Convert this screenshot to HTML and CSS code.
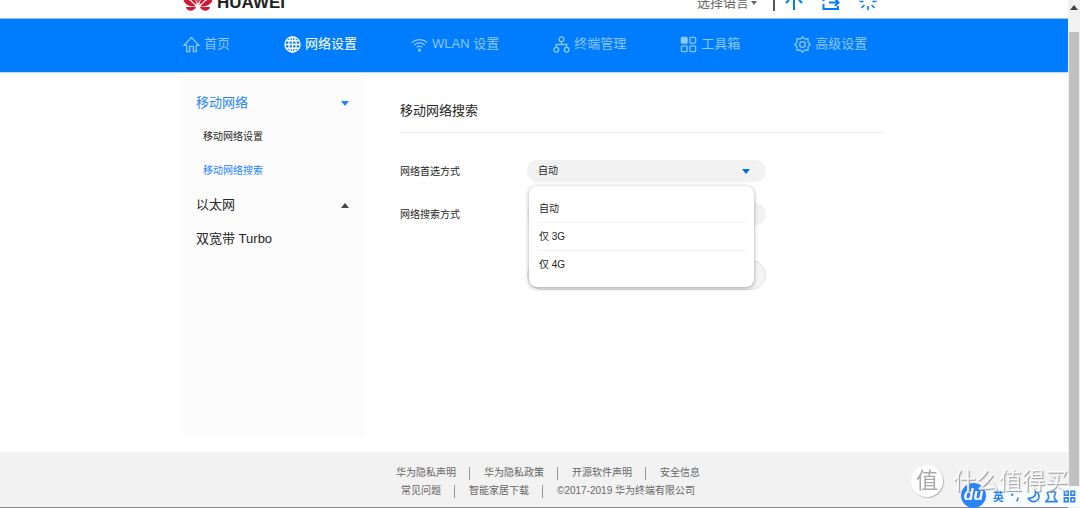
FILE: index.html
```html
<!DOCTYPE html>
<html lang="zh-CN">
<head>
<meta charset="utf-8">
<title>移动网络搜索</title>
<link rel="stylesheet" href="styles.css">
</head>
<body>
<div class="page">
  <header class="header">
    <div class="container header-row">
      <div class="brand">
        <svg class="brand-mark" viewBox="0 0 30 30">
          <path d="M13.800 24C12 17 9 11 6 7c-3 5 0 12 7.800 17zM16.200 24c1.800-7 4.800-13 7.800-17 3 5 0 12-7.800 17zM14.500 23C11 14 10 6 13.500 2c1.800 6 1.800 13 1 21zM15.500 23C19 14 20 6 16.500 2c-1.800 6-1.800 13-1 21z"/>
          <path d="M12.800 25.500C9 21 5 18 .3 16c-.4 6 4.300 10 12.500 9.500zM17.200 25.500c3.800-4.500 7.800-7.500 12.500-9.500.4 6-4.300 10-12.500 9.500z"/>
          <path d="M13.300 26.300C9 26 6 26 2.600 26.300c2.400 4.700 7.500 4.600 10.700 0zM16.700 26.300c4.300-.3 7.300-.3 10.700 0-2.400 4.700-7.500 4.600-10.700 0z"/>
        </svg>
        <span class="brand-name">HUAWEI</span>
      </div>
      <div class="tools">
        <button class="language" type="button">选择语言<span class="caret caret-small"></span></button>
        <span class="tools-line"></span>
        <a class="tool" href="#" aria-label="首页"><svg viewBox="0 0 18 18"><path d="M1 11l3-3M17 11l-3-3M9 8v10"/></svg></a>
        <a class="tool" href="#" aria-label="退出"><svg viewBox="0 0 18 18"><path d="M1.500 12v5H16v-3M1.500 9V1H16v6M7 10.500h9M13 7l3.500 3.500L13 14"/></svg></a>
        <a class="tool" href="#" aria-label="重启"><svg class="spinner" viewBox="0 0 18 18"><path d="M9 0v4M9 14v4M.5 9.500h4M13.500 9.500h4M3 3l3 3M12.500 13l3 3M15 3l-3 3M5.500 13l-3 3"/></svg></a>
      </div>
    </div>
  </header>

  <nav class="nav">
    <div class="container nav-row">
      <a class="nav-item" href="#"><svg viewBox="0 0 18 18"><path d="M1 10 9 1.500 17 10h-3v6.500h-3V11H7v5.500H4V10z"/></svg>首页</a>
      <a class="nav-item active" href="#"><svg viewBox="0 0 18 18"><circle cx="9" cy="9" r="8"/><ellipse cx="9" cy="9" rx="4" ry="8"/><path d="M9 1v16M1 9h16M2.500 5h13M2.500 13h13"/></svg>网络设置</a>
      <a class="nav-item" href="#"><svg viewBox="0 0 18 18"><path d="M1 7a11.500 11.500 0 0 1 16 0M3.500 9.500a8 8 0 0 1 11 0M6 12a4.500 4.500 0 0 1 6 0"/><circle cx="9" cy="15" r="1"/></svg>WLAN 设置</a>
      <a class="nav-item" href="#"><svg viewBox="0 0 18 18"><circle cx="9" cy="3.500" r="2.500"/><circle cx="3.500" cy="14.500" r="2.500"/><circle cx="14.500" cy="14.500" r="2.500"/><path d="M9 6v3M3.500 12V9h11v3"/></svg>终端管理</a>
      <a class="nav-item" href="#"><svg viewBox="0 0 18 18"><rect x="1.500" y="1.500" width="6" height="6" rx="1" fill="currentColor"/><rect x="10.500" y="1.500" width="6" height="6" rx="1"/><rect x="1.500" y="10.500" width="6" height="6" rx="1"/><rect x="10.500" y="10.500" width="6" height="6" rx="1"/></svg>工具箱</a>
      <a class="nav-item" href="#"><svg viewBox="0 0 18 18"><path d="M9 .8 11 3l3.800-.1L15 6.800 17.200 9 15 11.200l-.2 3.900L11 15l-2 2.200L7 15l-3.800.1-.2-3.900L.8 9 3 6.800l.2-3.900L7 3z"/><circle cx="9" cy="9" r="3"/></svg>高级设置</a>
    </div>
  </nav>

  <div class="container body-row">
    <aside class="sidebar">
      <a class="side-item current" href="#">移动网络<span class="caret"></span></a>
      <a class="side-item sub" href="#">移动网络设置</a>
      <a class="side-item sub current" href="#">移动网络搜索</a>
      <a class="side-item" href="#">以太网<span class="caret caret-up"></span></a>
      <a class="side-item" href="#">双宽带 Turbo</a>
    </aside>

    <main class="content">
      <h1 class="title">移动网络搜索</h1>
      <form class="form">
        <label class="label" for="mode">网络首选方式</label>
        <div class="field">
          <select class="select" id="mode"><option>自动</option></select>
          <span class="caret field-caret"></span>
          <ul class="menu" role="listbox">
            <li class="menu-item" role="option">自动</li>
            <li class="menu-item" role="option">仅 3G</li>
            <li class="menu-item" role="option">仅 4G</li>
          </ul>
        </div>
        <label class="label" for="search">网络搜索方式</label>
        <div class="field"><select class="select" id="search"></select></div>
        <button class="submit" type="button"></button>
      </form>
    </main>
  </div>

  <footer class="footer">
    <div class="links"><a href="#">华为隐私声明</a><a href="#">华为隐私政策</a><a href="#">开源软件声明</a><a href="#">安全信息</a></div>
    <div class="links"><a href="#">常见问题</a><a href="#">智能家居下载</a><span>©2017-2019 华为终端有限公司</span></div>
  </footer>
</div>

<div class="scrollbar"><span class="caret caret-up"></span><div class="thumb"></div></div>

<div class="ime">
  <span class="ime-logo">du</span>
  <span class="ime-lang">英</span>
  <svg viewBox="0 0 14 14"><circle cx="3.500" cy="5" r="1.300" fill="currentColor" stroke="none"/><path d="M9.500 8v1.500q0 1.500-1.500 2.500"/></svg>
  <svg viewBox="0 0 14 14"><path d="M9 1.500q1.500 7-7.500 7.500 2 4 6.500 3.500 5-1 5-6Q12.500 3 9 1.500z"/></svg>
  <svg viewBox="0 0 14 14"><path d="M4.500 1.500q2.500 1.500 5 0l2 1.500-1.500 4 .5 2.500L13 12.500H1L3.500 9.500 4 7 2.500 3z"/></svg>
  <svg viewBox="0 0 14 14"><path d="M1.500 1.500h4v4h-4zM8.500 1.500h4v4h-4zM1.500 8.500h4v4h-4zM8.500 8.500h4v4h-4z"/></svg>
</div>
<div class="watermark"><span class="watermark-badge">值</span><span>什么值得买</span></div>
</body>
</html>
```

FILE: styles.css
```css
* { box-sizing: border-box; }

body {
  margin: 0;
  min-height: 100vh;
  display: flex;
  background: #fff;
  color: #262626;
  font-family: "Liberation Sans", "Noto Sans CJK SC", sans-serif;
  font-size: 13px;
  line-height: 20px;
}

a { color: inherit; text-decoration: none; }
button, select { font: inherit; color: inherit; border: 0; padding: 0; background: none; }
svg { fill: none; stroke: currentColor; }

.page { flex: 1; display: flex; flex-direction: column; }
.container { width: 100%; max-width: 702px; margin: 0 auto; }

.caret {
  border: 4px solid transparent;
  border-top: 5px solid currentColor;
  border-bottom: 0;
}
.caret-up { border-top: 0; border-bottom: 5px solid #444; }
.caret-small { border-width: 4px 3px 0; }

.header { height: 18px; overflow: hidden; display: flex; align-items: flex-end; }
.header-row { display: flex; justify-content: space-between; align-items: flex-end; padding-bottom: 7px; }
.brand { display: flex; align-items: flex-end; gap: 4px; }
.brand-mark { width: 30px; height: 30px; stroke: none; fill: #cf1733; }
.brand-name { font-size: 17px; font-weight: bold; line-height: 17px; color: #222; }
.tools { display: flex; align-items: flex-end; padding-right: 8px; color: #007dff; }
.language { display: flex; align-items: center; gap: 2px; color: #666; line-height: 16px; }
.tools-line { width: 2px; height: 18px; background: #555; margin: 0 10px 0 16px; }
.tool { display: flex; padding-bottom: 1px; }
.tool + .tool { margin-left: 19px; }
.tool svg { width: 18px; height: 18px; stroke-width: 2; }
.tool .spinner { stroke-width: 1.6; }

.nav { background: #007dff; border-top: 1px solid #8cc4ff; border-bottom: 1px solid #b8dbff; }
.nav-row { display: flex; gap: 54px; padding: 15px 0 18px; }
.nav-item { display: flex; align-items: center; gap: 4px; color: #8cc6ff; white-space: nowrap; }
.nav-item svg { width: 17px; height: 17px; stroke-width: 1.4; }
.nav-item.active { color: #fff; }

.body-row { flex: 1; display: flex; gap: 34px; padding: 1px 0 15px; }
.sidebar { width: 183px; background: #fcfcfc; padding: 12px 17px 13px 13px; }
.side-item { display: flex; align-items: center; justify-content: space-between; height: 34px; }
.side-item.sub { font-size: 10px; padding-left: 7px; }
.side-item.current { color: #1e84ff; }

.content { flex: 1; padding-top: 27px; }
.title { margin: 0; padding-bottom: 11px; border-bottom: 1px solid #eee; font-size: 13px; font-weight: normal; }
.form { display: grid; grid-template-columns: 127px 239px; row-gap: 21px; padding-top: 27px; font-size: 10px; }
.label { line-height: 20px; padding-top: 2px; }
.field { position: relative; }
.select { display: block; width: 100%; height: 22px; padding: 0 11px; border-radius: 11px; background: #f2f2f2; appearance: none; }
.field-caret { position: absolute; right: 16px; top: 9px; color: #0070e0; }
.menu {
  position: absolute;
  z-index: 1;
  top: 26px;
  left: 2px;
  right: 12px;
  margin: 0;
  padding: 9px 8px 8px 9px;
  list-style: none;
  background: #fff;
  border-radius: 8px;
  box-shadow: 0 1px 4px rgba(0, 0, 0, .35);
}
.menu-item { height: 28px; line-height: 28px; padding-left: 1px; border-bottom: 1px solid #f2f2f2; }
.menu-item:last-child { border-bottom: 0; }
.submit { grid-column: 2; height: 30px; margin-top: 14px; border: 1px solid #e2e2e2; border-radius: 15px; background: #f5f5f5; }

.footer { padding: 12px 0 7px 28px; background: #f2f2f2; border-bottom: 1px solid #888; color: #666; font-size: 10px; line-height: 18px; }
.links { display: flex; justify-content: center; align-items: center; }
.links > * { display: flex; align-items: center; }
.links > * + *::before { content: ""; width: 1px; height: 13px; margin: 0 14px 0 13px; background: #999; }

.scrollbar { width: 12px; padding: 5px 1px 1px; display: flex; flex-direction: column; align-items: center; gap: 22px; background: #f1f1f1; }
.thumb { flex: 1; width: 100%; background: #c1c1c1; }

.ime {
  position: fixed;
  right: 0;
  bottom: 1px;
  height: 21px;
  padding-right: 4px;
  display: flex;
  align-items: center;
  gap: 5px;
  background: #f8fbff;
  border-radius: 12px 0 0 0;
  color: #2b83f6;
}
.ime svg { width: 13px; height: 13px; stroke-width: 1.7; }
.ime-lang { font-size: 11px; font-weight: bold; padding-left: 2px; }
.ime-logo { width: 25px; height: 25px; margin-bottom: 3px; border-radius: 50%; background: #2b83f6; color: #fff; font-size: 16px; font-style: italic; font-weight: bold; line-height: 24px; text-align: center; }

.watermark {
  position: fixed;
  right: 12px;
  bottom: 11px;
  display: flex;
  align-items: center;
  gap: 10px;
  color: rgba(255, 255, 255, .85);
  font-size: 23px;
  line-height: 32px;
  text-shadow: 1px 1px 1px #999;
}
.watermark-badge { width: 32px; height: 32px; border-radius: 50%; background: #fff; box-shadow: 1px 1px 1px #bbb; color: #aaa; font-size: 22px; text-align: center; text-shadow: none; }
```
